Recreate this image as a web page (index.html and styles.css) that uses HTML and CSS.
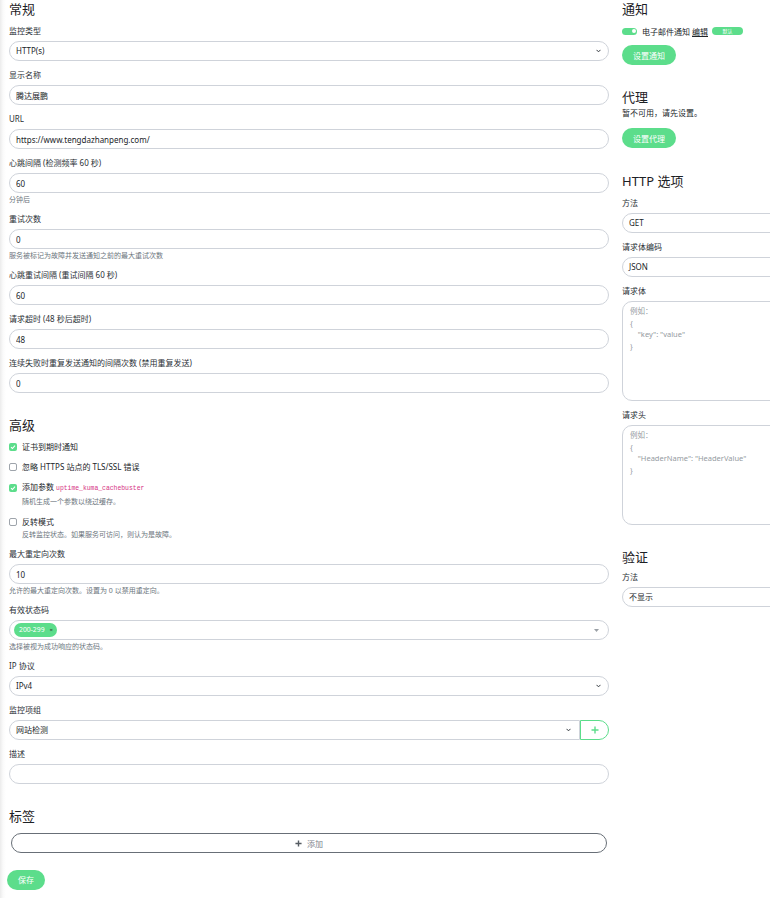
FILE: index.html
```html
<!DOCTYPE html>
<html lang="zh-CN">
<head>
<meta charset="utf-8">
<title>编辑监控项</title>
<link rel="stylesheet" href="styles.css">
</head>
<body>
<div class="page">
  <div class="col col-left">
    <h2 class="heading">常规</h2>

    <div class="field">
      <label class="label">监控类型</label>
      <div class="control select"><span class="select-text">HTTP(s)</span><svg class="chev" viewBox="0 0 6 4" width="6" height="4"><polyline points="0.6,0.6 3,3 5.4,0.6" fill="none" stroke="#343a40" stroke-width="1.2"/></svg></div>
    </div>

    <div class="field">
      <label class="label">显示名称</label>
      <input class="control" type="text" value="腾达展鹏" readonly>
    </div>

    <div class="field">
      <label class="label">URL</label>
      <input class="control" type="text" value="https://www.tengdazhanpeng.com/" readonly>
    </div>

    <div class="field">
      <label class="label">心跳间隔 (检测频率 60 秒)</label>
      <input class="control" type="text" value="60" readonly>
      <div class="help">分钟后</div>
    </div>

    <div class="field">
      <label class="label">重试次数</label>
      <input class="control" type="text" value="0" readonly>
      <div class="help">服务被标记为故障并发送通知之前的最大重试次数</div>
    </div>

    <div class="field">
      <label class="label">心跳重试间隔 (重试间隔 60 秒)</label>
      <input class="control" type="text" value="60" readonly>
    </div>

    <div class="field">
      <label class="label">请求超时 (48 秒后超时)</label>
      <input class="control" type="text" value="48" readonly>
    </div>

    <div class="field">
      <label class="label">连续失败时重复发送通知的间隔次数 (禁用重复发送)</label>
      <input class="control" type="text" value="0" readonly>
    </div>

    <h2 class="heading heading-spaced">高级</h2>

    <div class="check-item">
      <div class="check-row"><span class="box box-on"><svg viewBox="0 0 8 8" width="8" height="8"><polyline points="2,4.2 3.4,5.5 6,2.6" fill="none" stroke="#fff" stroke-width="1.1"/></svg></span><span>证书到期时通知</span></div>
    </div>
    <div class="check-item">
      <div class="check-row"><span class="box"></span><span>忽略 HTTPS 站点的 TLS/SSL 错误</span></div>
    </div>
    <div class="check-item">
      <div class="check-row"><span class="box box-on"><svg viewBox="0 0 8 8" width="8" height="8"><polyline points="2,4.2 3.4,5.5 6,2.6" fill="none" stroke="#fff" stroke-width="1.1"/></svg></span><span>添加参数 <code class="code">uptime_kuma_cachebuster</code></span></div>
      <div class="help check-help">随机生成一个参数以绕过缓存。</div>
    </div>
    <div class="check-item check-last">
      <div class="check-row"><span class="box"></span><span>反转模式</span></div>
      <div class="help check-help">反转监控状态。如果服务可访问，则认为是故障。</div>
    </div>

    <div class="field">
      <label class="label">最大重定向次数</label>
      <input class="control" type="text" value="10" readonly>
      <div class="help">允许的最大重定向次数。设置为 0 以禁用重定向。</div>
    </div>

    <div class="field">
      <label class="label">有效状态码</label>
      <div class="control multi"><span class="chip">200-299<span class="chip-x">×</span></span><span class="fill"></span><svg class="caret" viewBox="0 0 5 3" width="5" height="3"><polygon points="0,0 5,0 2.5,3" fill="#9aa0a6"/></svg></div>
      <div class="help">选择被视为成功响应的状态码。</div>
    </div>

    <div class="field">
      <label class="label">IP 协议</label>
      <div class="control select"><span class="select-text">IPv4</span><svg class="chev" viewBox="0 0 6 4" width="6" height="4"><polyline points="0.6,0.6 3,3 5.4,0.6" fill="none" stroke="#343a40" stroke-width="1.2"/></svg></div>
    </div>

    <div class="field">
      <label class="label">监控项组</label>
      <div class="group-row">
        <div class="control select select-left"><span class="select-text">网站检测</span><svg class="chev" viewBox="0 0 6 4" width="6" height="4"><polyline points="0.6,0.6 3,3 5.4,0.6" fill="none" stroke="#343a40" stroke-width="1.2"/></svg></div>
        <div class="plus-btn"><svg viewBox="0 0 8 8" width="8" height="8"><path d="M4 0.5V7.5M0.5 4H7.5" stroke="#5cdd8b" stroke-width="1.4"/></svg></div>
      </div>
    </div>

    <div class="field">
      <label class="label">描述</label>
      <input class="control" type="text" value="" readonly>
    </div>

    <h2 class="heading heading-spaced heading-tags">标签</h2>
    <div class="add-tag"><svg viewBox="0 0 8 8" width="7" height="7"><path d="M4 0.5V7.5M0.5 4H7.5" stroke="#555b62" stroke-width="1.6"/></svg><span>添加</span></div>

    <div class="save-wrap"><button class="btn save-btn" type="button">保存</button></div>
  </div>

  <div class="col col-right">
    <h2 class="heading">通知</h2>
    <div class="notify-row">
      <span class="toggle"><span class="knob"></span></span>
      <span>电子邮件通知</span>
      <a class="edit-link">编辑</a>
      <span class="badge">默认</span>
    </div>
    <button class="btn" type="button">设置通知</button>

    <h2 class="heading heading-section heading-tight">代理</h2>
    <div class="plain-text">暂不可用，请先设置。</div>
    <button class="btn btn-proxy" type="button">设置代理</button>

    <h2 class="heading heading-section">HTTP 选项</h2>

    <div class="field">
      <label class="label">方法</label>
      <div class="control select"><span class="select-text">GET</span></div>
    </div>
    <div class="field">
      <label class="label">请求体编码</label>
      <div class="control select"><span class="select-text">JSON</span></div>
    </div>
    <div class="field">
      <label class="label">请求体</label>
      <textarea class="area" readonly placeholder="例如：&#10;{&#10;    &quot;key&quot;: &quot;value&quot;&#10;}"></textarea>
    </div>
    <div class="field">
      <label class="label">请求头</label>
      <textarea class="area" readonly placeholder="例如：&#10;{&#10;    &quot;HeaderName&quot;: &quot;HeaderValue&quot;&#10;}"></textarea>
    </div>

    <h2 class="heading heading-spaced heading-auth">验证</h2>
    <div class="field">
      <label class="label">方法</label>
      <div class="control select"><span class="select-text">不显示</span></div>
    </div>
  </div>
</div>
</body>
</html>
```

FILE: styles.css
```css
html, body {
  margin: 0;
  padding: 0;
  background: #fff;
}

body {
  font-family: "Noto Sans", "Noto Sans CJK SC", sans-serif;
  color: #212529;
  overflow: hidden;
}

.page {
  width: 770px;
  height: 898px;
  overflow: hidden;
  box-sizing: border-box;
  padding-left: 9px;
  display: grid;
  grid-template-columns: 600px 300px;
  column-gap: 13px;
  align-items: start;
  background: linear-gradient(90deg, #ececec 0, #fafafa 3px, #fff 6px);
}

.col {
  display: flex;
  flex-direction: column;
}

.heading {
  font-size: 13px;
  line-height: 18px;
  font-weight: 400;
  margin: 0 0 7px 0;
  color: #1d2125;
}

.heading-spaced {
  margin-top: 15px;
}

.heading-tags {
  margin-top: 15px;
  margin-bottom: 8px;
}

.heading-section {
  margin-top: 24px;
}

.heading-tight {
  margin-top: 23px;
  margin-bottom: 1px;
}

.heading-auth {
  margin-bottom: 5px;
}

.field {
  margin-bottom: 8px;
  display: flex;
  flex-direction: column;
}

.label {
  display: block;
  font-size: 8px;
  line-height: 12px;
  margin-bottom: 4px;
  color: #2b3036;
}

.control {
  box-sizing: border-box;
  height: 20px;
  width: 100%;
  border: 1px solid #cfd3da;
  border-radius: 999px;
  padding: 0 6px;
  font-family: "Noto Sans", "Noto Sans CJK SC", sans-serif;
  font-size: 8px;
  color: #212529;
  background: #fff;
  outline: none;
  margin: 0;
}

.select {
  display: flex;
  align-items: center;
  padding-right: 7px;
}

.select-text {
  flex: 1;
  line-height: 12px;
}

.chev {
  display: block;
  width: 5px;
  height: 4px;
}

.multi {
  display: flex;
  align-items: center;
  padding-left: 4px;
  padding-right: 9px;
}

.fill {
  flex: 1;
}

.chip {
  display: inline-flex;
  align-items: center;
  height: 14px;
  box-sizing: border-box;
  padding: 0 4px 0 5px;
  background: #5cdd8b;
  color: #fff;
  border-radius: 999px;
  font-size: 6.8px;
  line-height: 14px;
}

.chip-x {
  color: #2f3a33;
  font-size: 6px;
  margin-left: 5px;
}

.caret {
  display: block;
}

.help {
  font-size: 7px;
  line-height: 10px;
  margin-top: 2px;
  color: #6c757d;
}

.check-item {
  margin-bottom: 9px;
}

.check-last {
  margin-bottom: 8px;
}

.check-row {
  display: flex;
  align-items: center;
  gap: 5px;
  font-size: 8px;
  line-height: 11px;
  color: #212529;
}

.box {
  width: 8px;
  height: 8px;
  box-sizing: border-box;
  border: 1px solid #9ea4ab;
  border-radius: 2px;
  background: #fff;
  display: flex;
  align-items: center;
  justify-content: center;
  flex: none;
}

.box-on {
  border: none;
  background: #5cdd8b;
}

.box svg {
  display: block;
}

.code {
  font-family: "Liberation Mono", "DejaVu Sans Mono", monospace;
  font-size: 6.4px;
  color: #d63384;
}

.check-help {
  margin-top: 3px;
  margin-left: 13px;
}

.group-row {
  display: flex;
}

.select-left {
  flex: 1;
  border-radius: 999px 0 0 999px;
  padding-right: 8px;
}

.plus-btn {
  width: 29px;
  height: 20px;
  box-sizing: border-box;
  border: 1px solid #5cdd8b;
  border-radius: 0 999px 999px 0;
  display: flex;
  align-items: center;
  justify-content: center;
  flex: none;
}

.plus-btn svg {
  display: block;
}

.add-tag {
  margin: 0 2px;
  height: 20px;
  box-sizing: border-box;
  border: 1px solid #686f77;
  border-radius: 999px;
  display: flex;
  align-items: center;
  justify-content: center;
  gap: 5px;
  font-size: 8px;
  color: #7d848b;
}

.add-tag svg {
  display: block;
}

.save-wrap {
  margin-top: 13px;
  margin-left: -2px;
}

.btn {
  display: inline-flex;
  align-items: center;
  justify-content: center;
  height: 20px;
  box-sizing: border-box;
  padding: 0 11px;
  border: none;
  border-radius: 999px;
  background: #5cdd8b;
  color: #fff;
  font-family: "Noto Sans", "Noto Sans CJK SC", sans-serif;
  font-size: 8px;
  align-self: flex-start;
  margin: 0;
}

.save-btn {
  padding: 0 11px;
}

.notify-row {
  display: flex;
  align-items: center;
  height: 12px;
  font-size: 8px;
  margin-bottom: 8px;
}

.toggle {
  width: 15px;
  height: 7px;
  border-radius: 999px;
  background: #5cdd8b;
  display: flex;
  align-items: center;
  justify-content: flex-end;
  padding-right: 1.5px;
  box-sizing: border-box;
  margin-right: 5px;
}

.knob {
  width: 4px;
  height: 4px;
  border-radius: 50%;
  background: #fff;
}

.edit-link {
  color: #212529;
  text-decoration: underline;
  margin-left: 2px;
}

.badge {
  margin-left: 4px;
  height: 8px;
  width: 31px;
  border-radius: 999px;
  background: #5cdd8b;
  color: #fff;
  font-size: 5px;
  line-height: 8px;
  text-align: center;
}

.plain-text {
  font-size: 8px;
  line-height: 12px;
}

.btn-proxy {
  margin-top: 9px;
}

.area {
  box-sizing: border-box;
  height: 100px;
  width: 100%;
  border: 1px solid #cfd3da;
  border-radius: 10px;
  padding: 4px 7px;
  font-family: "Noto Sans", "Noto Sans CJK SC", sans-serif;
  font-size: 7.5px;
  line-height: 11.7px;
  resize: none;
  overflow: hidden;
  outline: none;
  margin: 0;
  display: block;
}

.area::placeholder {
  color: #959ba1;
}
```
